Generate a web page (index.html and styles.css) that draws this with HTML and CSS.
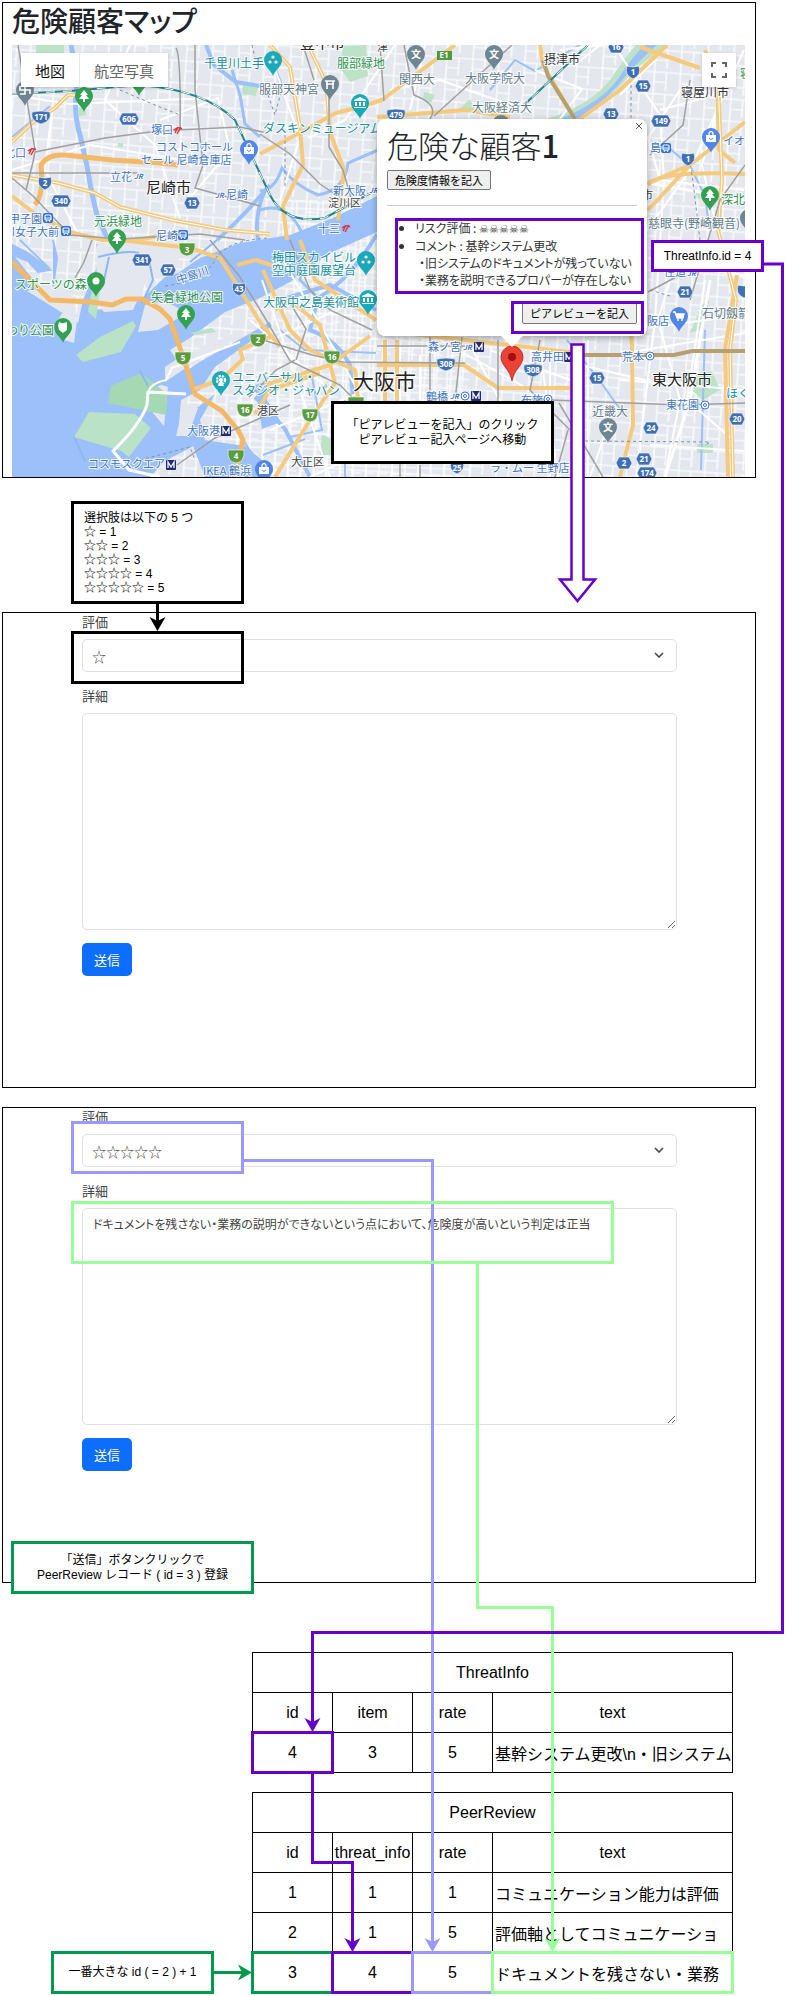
FILE: index.html
```html
<!DOCTYPE html>
<html lang="ja">
<head>
<meta charset="utf-8">
<meta name="viewport" content="width=device-width, initial-scale=1">
<title>危険顧客マップ</title>
<link rel="stylesheet" href="styles.css">
</head>
<body>
<main class="diagram">
  <section class="panel map-panel">
    <h1 class="page-title">危険顧客マップ</h1>
    <div class="map">
      <svg class="map-canvas" viewBox="12 45 733 432" role="img" aria-label="大阪周辺の地図">
        <defs>
          <pattern id="streets" width="26" height="22" patternUnits="userSpaceOnUse" patternTransform="rotate(4)">
            <path d="M0 4H26M8 0V22M20 4V22M8 14H20" fill="none" stroke="#fff" stroke-width="1.2"/>
          </pattern>
          <pattern id="blocks" width="13" height="15" patternUnits="userSpaceOnUse" patternTransform="rotate(2)">
            <path d="M0 3H13M5 0V15M5 10H13" fill="none" stroke="#fff" stroke-width="1.2"/>
          </pattern>
          <path id="pin" d="M0 16C-1 11-9 7-9 0a9 9 0 1 1 18 0C9 7 1 11 0 16Z"/>
          <path id="tree" fill="#fff" d="M0-6L4-1H2L5 3H1V6H-1V3H-5L-2-1H-4Z"/>
          <g id="bag"><path d="M-5-2H5V5H-5Z" fill="#fff"/><path d="M-2-2V-4Q0-7 2-4V-2" fill="none" stroke="#fff" stroke-width="1.3"/><path d="M-2 1Q0 4 2 1" fill="none" stroke="#4f86e8"/></g>
          <g id="dots" fill="#fff"><circle cy="-3" r="1.6"/><circle cx="-3" cy="2" r="1.6"/><circle cx="3" cy="2" r="1.6"/></g>
          <path id="museum" fill="#fff" d="M0-6L6-3V-2H-6V-3ZM-5-1H-3V3H-5ZM-1-1H1V3H-1ZM3-1H5V3H3ZM-6 4H6V5H-6Z"/>
          <path id="hex" fill="#3f70b5" stroke="#fff" stroke-width=".6" d="M-5-6H5L8 0 5 6H-5L-8 0Z"/>
          <path id="hexw" fill="#3f70b5" stroke="#fff" stroke-width=".6" d="M-7-6H7L10 0 7 6H-7L-10 0Z"/>
          <path id="nat" fill="#3f70b5" stroke="#fff" stroke-width=".6" d="M-6-6Q0-4 6-6Q9 3 0 7Q-9 3-6-6Z"/>
          <path id="natw" fill="#3f70b5" stroke="#fff" stroke-width=".6" d="M-9-5Q0-7 9-5Q11 4 0 7Q-11 4-9-5Z"/>
          <path id="exp" fill="#5b9c3f" stroke="#fff" stroke-width=".6" d="M-8-6H8Q9 6 0 7Q-9 6-8-6Z"/>
          <g id="metro"><rect x="-5" y="-5" width="10" height="10" rx="1" fill="#1d2b78"/><path d="M-3 3V-3L0 2 3-3V3" fill="none" stroke="#fff" stroke-width="1.3"/></g>
          <g id="train"><rect x="-5" y="-5" width="10" height="10" rx="2" fill="#2d6fd2"/><rect x="-3" y="-3" width="6" height="5" rx="1" fill="none" stroke="#fff" stroke-width="1.1"/><path d="M-2 4L-1 2M2 4L1 2M-3 0H3" stroke="#fff"/></g>
          <g id="ring" fill="none" stroke="#3f76c8"><circle r="4" fill="#fff"/><circle r="1.5"/></g>
          <g id="hankyu" fill="none" stroke="#dc3545" stroke-width="1.5"><path d="M-3 3L0-3M-1 4L3-3M-4 0Q0-4 4-1"/></g>
        </defs>

        <rect x="12" y="45" width="733" height="432" fill="#e4e8ee"/>
        <rect x="12" y="45" width="733" height="432" fill="url(#streets)"/>
        <path fill="url(#blocks)" d="M280 200H470V477H230V400L290 330Z"/>

        <g fill="#bce3c8">
          <path d="M36 45H64V53H36ZM343 46L366 45 368 76 350 82 340 68ZM243 84L258 86 256 96 242 94ZM680 380L712 371 720 390 703 400ZM690 333L702 305 710 300 700 330ZM697 444H713V453H697ZM322 435L337 441 335 455H320ZM78 108L85 106 86 115 79 116ZM118 143H123V147H118Z"/>
          <path d="M547 119Q590 105 610 80Q627 55 636 45H667Q650 56 630 75Q610 98 583 119Z"/>
          <path d="M424 92L435 95 431 103 423 100ZM458 110L470 99 475 110ZM694 190L702 192 699 200Z"/>
        </g>
        <path fill="#9cc0f9" d="M560 119Q604 101 620 76Q632 57 645 45H657Q645 55 628 73Q609 99 578 119Z"/>

        <g fill="#9cc0f9">
          <path d="M12 253L35 282 50 302 68 316 78 323 83 300 100 260 96 244 104 246 95 310 112 308 145 296 165 277 178 273 200 258 240 243 290 235 333 218 377 196V232L330 253 290 282 260 298 225 312 190 338 170 350 178 362 186 371 203 360 270 322 272 326 215 367 200 390 181 400 178 437 194 410 215 394 200 420 205 440 165 461 150 477H12Z"/>
          <path d="M190 438L245 446 270 467 267 477H205Z"/>
          <path d="M255 385L270 381 267 400 281 422 262 429Z"/>
        </g>
        <path d="M12 245L28 253 50 270 38 272 28 261 12 255ZM20 240L50 269M53 240L57 258 53 288" fill="#9cc0f9" stroke="#9cc0f9" stroke-width="2"/>
        <g fill="#e4e8ee">
          <path d="M27 291L55 286 70 291 78 319 61 312ZM65 308L77 320 74 343 64 340 57 322ZM97 245L136 240 182 240 178 264 145 284 133 310 104 312 96 301Z"/>
          <path d="M145 305L165 301 178 308 182 316 158 330 138 332Z"/>
          <path d="M165 367L180 357 239 331 244 334 202 357 165 382ZM150 388L162 385 168 387 164 426 153 413ZM184 403L198 408 188 436H176Z"/>
        </g>
        <g fill="#b9e2c6">
          <path d="M92 288L100 290 96 319 88 312ZM76 355L100 337 133 321 136 326 121 352 83 362ZM190 333L212 328 216 332 196 335Z"/>
          <path fill="#a5d9b4" d="M111 386L141 373 150 380 167 394 166 415 108 403Z"/>
          <path d="M89 412L135 414 151 428 129 457 121 451 74 437Z"/>
        </g>
        <path d="M74 437L85 461M140 371L148 386M217 240L190 262M149 260L153 280 142 303M98 257Q126 250 139 253M109 257L103 285" fill="none" stroke="#8db8f5" stroke-width="2"/>

        <g fill="none" stroke="#9cc0f9">
          <path stroke-width="5" d="M71 45L78 80Q72 108 80 135L87 166 92 194 97 215 108 240"/>
          <path stroke-width="4" d="M206 45L214 65 236 82 260 86M265 190Q252 220 260 250M217 240Q240 220 270 185"/>
          <path stroke-width="3" d="M232 70L240 95 245 124 260 137M260 191Q275 190 282 168Q294 185 318 195Q345 190 348 163L378 150M260 210Q290 200 305 240L300 280 320 300M283 92Q275 60 266 62"/>
          <path stroke-width="2" d="M490 90L515 60 535 71 580 45M660 140L690 166 705 196 709 225M567 340L597 377 625 416M705 330L701 470M12 137L50 106"/>
          <path stroke-width="4" d="M377 234Q350 280 318 298L310 330Q337 340 350 365L355 420M280 300L330 285 376 310M255 397L285 429 310 477"/>
          <path stroke-width="2" d="M290 377H312L322 430 290 437M345 400V477M280 330L305 350 376 353M263 455L305 439M236 430L268 477"/>
        </g>

        <g fill="none" stroke="#fff" stroke-width="2" stroke-linejoin="round">
          <path d="M12 95L70 104 210 98M12 170L90 145 220 166M130 45L105 100 155 145 180 218M52 110L45 170 80 238M160 120L218 98 230 150 185 204M148 392Q151 383 166 380L172 368 240 342M186 394L148 392"/>
          <path stroke-width="3" d="M148 391L147 405Q140 425 113 451L129 470 160 477M148 392L186 394"/>
          <path d="M270 55L300 138 280 200M308 138L345 120 395 45M425 45L410 110M390 90L440 80 530 112M560 50L602 45M535 70L582 89 560 119M615 47L660 115 664 180 655 320 636 477M655 60L620 95M575 65L600 45M680 90L648 138 660 180 744 190M660 110L722 93 702 165 715 220M744 50L690 170 640 240"/>
          <path d="M648 328L742 315M632 352L745 333M670 280L658 320 680 400 665 477M705 280L687 400 733 440M588 340V477M550 350V477M610 420L590 477M620 380L745 390M650 445L745 451M580 365L645 380M540 350L558 477M262 280L330 477M280 255L375 420M250 350L380 290M270 430L390 380M310 477L395 438M250 320L330 390M400 345V475M490 350L570 380M420 355V400M440 340L530 390M470 345L500 401"/>
        </g>
        <path fill="none" stroke="#fff" stroke-width="3" d="M648 258L745 276M632 180L744 200M710 280L690 400 665 477"/>

        <g fill="none" stroke="#f5ca7c" stroke-width="4" stroke-linejoin="round">
          <path d="M12 142L32 123 55 108 68 95H88M12 175L58 183 95 193 120 207 172 220 225 230 270 234M12 196L38 216 70 232 102 240 132 241 158 236"/>
          <path stroke="#f3b968" stroke-width="5" d="M35 205Q44 195 41 165Q47 154 65 155L112 160 160 163 178 165M12 262L33 283 50 300 92 302 112 305 126 299 142 299 160 309 170 319 185 363 195 394 222 411 238 430 243 440 235 477"/>
          <path d="M120 240L190 248 220 258 232 277 260 322 280 347M195 389L222 379 243 359 240 350 272 336M237 265L256 260 280 268"/>
          <path d="M260 154L290 138 336 113 360 107 382 100 455 45M270 45L290 67 300 128 303 165 283 206 287 240M308 45L326 83 330 132 344 170 338 220M540 45L543 65 575 119"/>
          <path d="M377 117L466 110 510 117M580 119L620 90 667 45M640 47L700 68M648 183L690 165 745 122M648 210L690 165M705 50L717 78 719 150 735 163M648 185Q660 170 745 174M718 80L722 180 718 230 736 300 730 350 733 477"/>
          <path d="M377 330L577 353M377 365H464L498 388H570M385 340V401M397 340V401M625 275L632 345 633 425 620 477M737 275L725 349 728 477M263 270L290 330 310 350 355 370 358 400M265 385L330 365 370 336M255 414L270 390 320 373M300 240L315 280 376 320M275 310L290 300 320 325 335 383 310 420 275 477"/>
        </g>
        <g fill="none" stroke="#fff" stroke-width="1">
          <path d="M12 142L32 123 55 108 68 95H88M12 175L58 183 95 193 120 207 172 220 225 230 270 234M270 45L290 67 300 128M308 45L326 83 330 132M718 80L722 180 718 230 736 300 730 350 733 477"/>
        </g>
        <path fill="none" stroke="#b69f70" stroke-width="4" d="M543 60L548 76 575 119M577 355H674L692 351H745"/>

        <g fill="none" stroke="#a0a0a0" stroke-width="1.500">
          <path d="M18 45L35 150M12 173H108L138 173M33 162L35 152 105 138 150 132 176 130 240 127 267 133M176 48Q181 55 180 130M178 165Q191 150 202 160M195 45V90L203 165 195 188 260 206M12 178L33 196 70 235 120 239 200 234 245 240M33 162L26 190"/>
          <path d="M260 134L290 154 320 184 348 203M303 45L314 80M329 95V147L343 170 351 198M380 45L384 101M404 45L414 95Q440 105 430 119M512 45L434 116M690 80L683 125 650 155M745 165L720 200 690 300M648 292L680 275"/>
          <path d="M210 240L240 277 265 318 290 361 317 374 340 385 356 401M263 340L312 355 343 362 465 363M377 346H465M430 337V401M462 337L455 401M498 340V401M540 340L530 390 570 430M559 403L603 477M568 430L555 477M524 399L682 405 745 403M177 465L215 438 290 405M290 240L310 290 330 310 372 330M290 303L306 329 296 360M249 397L276 370 295 360M400 401V477M420 465V477M92 240L84 262 75 278"/>
        </g>
        <path fill="none" stroke="#24838a" stroke-width="2" d="M12 94L70 91 140 85Q205 90 235 120L270 195Q285 225 325 218L376 190M588 45L524 105"/>
        <path fill="none" stroke="#fff" stroke-width="1" stroke-dasharray="9 8" d="M12 94L70 91 140 85Q205 90 235 120L270 195Q285 225 325 218L376 190M588 45L524 105"/>
        <path fill="none" stroke="#7f91aa" stroke-dasharray="3 3" d="M120 90L155 105 180 115M285 135V189M268 95L275 115 282 88M252 45L258 70M631 85V119M690 160L694 190 700 240M165 286Q205 280 215 260T270 238M140 460L190 447 195 460M585 441L710 442 705 445M650 290L670 296"/>

        <g class="road-numbers">
          <use href="#natw" x="41" y="117"/><text x="41" y="120">171</text>
          <use href="#hexw" x="129" y="119"/><text x="129" y="122">606</text>
          <use href="#nat" x="45" y="183"/><text x="45" y="186">2</text>
          <use href="#hexw" x="61" y="201"/><text x="61" y="204">340</text>
          <use href="#hex" x="192" y="203"/><text x="192" y="206">13</text>
          <use href="#exp" x="187" y="249"/><text x="187" y="253">3</text>
          <use href="#hexw" x="142" y="260"/><text x="142" y="263">341</text>
          <use href="#hex" x="168" y="270"/><text x="168" y="273">57</text>
          <use href="#nat" x="239" y="289"/><text x="239" y="292">43</text>
          <use href="#exp" x="183" y="358"/><text x="183" y="361">5</text>
          <use href="#exp" x="258" y="340"/><text x="258" y="343">2</text>
          <use href="#exp" x="245" y="410"/><text x="245" y="413">16</text>
          <use href="#exp" x="236" y="456"/><text x="236" y="459">4</text>
          <use href="#exp" x="332" y="357"/><text x="332" y="360">16</text>
          <use href="#exp" x="310" y="415"/><text x="310" y="418">17</text>
          <use href="#exp" x="356" y="403"/>
          <use href="#natw" x="396" y="115"/><text x="396" y="118">479</text>
          <rect x="437" y="51" width="15" height="9" fill="#4e9a3d"/><text x="444" y="58">E1</text>
          <use href="#hex" x="616" y="47"/><text x="616" y="50">16</text>
          <use href="#nat" x="633" y="72"/><text x="633" y="75">1</text>
          <use href="#hex" x="643" y="86"/><text x="643" y="89">15</text>
          <use href="#hex" x="611" y="114"/><text x="611" y="117">13</text>
          <use href="#hexw" x="661" y="121"/><text x="661" y="124">149</text>
          <use href="#nat" x="688" y="159"/><text x="688" y="162">1</text>
          <use href="#natw" x="446" y="364"/><text x="446" y="367">308</text>
          <use href="#nat" x="457" y="467"/><text x="457" y="471">25</text>
          <use href="#natw" x="533" y="370"/><text x="533" y="373">308</text>
          <use href="#hex" x="685" y="292"/><text x="685" y="295">21</text>
          <use href="#nat" x="744" y="291"/>
          <use href="#hex" x="597" y="378"/><text x="597" y="381">15</text>
          <use href="#hex" x="651" y="428"/><text x="651" y="431">24</text>
          <use href="#hex" x="737" y="419"/><text x="737" y="422">20</text>
          <use href="#hex" x="624" y="463"/><text x="624" y="466">2</text>
          <use href="#hex" x="644" y="459"/><text x="644" y="462">21</text>
          <use href="#hexw" x="647" y="473"/><text x="647" y="476">174</text>
        </g>

        <g class="pins">
          <g transform="translate(25 90)"><use href="#pin" fill="#6f8592"/><path d="M-5-4V0H5V4M-5 4H0V-4H5" fill="none" stroke="#fff" stroke-width="1.6"/></g>
          <g transform="translate(84 96)"><use href="#pin" fill="#34a152"/><use href="#tree"/></g>
          <use href="#pin" x="139" y="80" fill="#34a152"/>
          <g transform="translate(249 149)"><use href="#pin" fill="#4f86e8"/><use href="#bag"/></g>
          <g transform="translate(117 238)"><use href="#pin" fill="#34a152"/><use href="#tree"/></g>
          <g transform="translate(273 60)"><use href="#pin" fill="#1aa9b9"/><use href="#dots"/></g>
          <g transform="translate(330 84)"><use href="#pin" fill="#6f8592"/><path d="M-5-3H5M-4 0H4M-3-3V5M3-3V5" stroke="#fff" stroke-width="1.6"/></g>
          <g transform="translate(360 103)"><use href="#pin" fill="#1aa9b9"/><use href="#museum"/></g>
          <g transform="translate(416 54)"><use href="#pin" fill="#6f8592"/><text class="pin-letter" y="4">文</text></g>
          <g transform="translate(494 54)"><use href="#pin" fill="#6f8592"/><text class="pin-letter" y="4">文</text></g>
          <use href="#pin" x="501" y="124" fill="#6f8592"/>
          <g transform="translate(711 137)"><use href="#pin" fill="#4f86e8"/><use href="#bag"/></g>
          <g transform="translate(710 195)"><use href="#pin" fill="#34a152"/><use href="#tree"/></g>
          <use href="#pin" x="749" y="218" fill="#6f8592"/>
          <g transform="translate(96 281)"><use href="#pin" fill="#34a152"/><circle r="3.5" fill="#fff"/></g>
          <g transform="translate(186 314)"><use href="#pin" fill="#34a152"/><use href="#tree"/></g>
          <g transform="translate(63 327)"><use href="#pin" fill="#34a152"/><path fill="#fff" d="M-5-2L4-5V3L0 6-4 3ZM-4-5L1-3-5-1Z"/></g>
          <g transform="translate(221 380)"><use href="#pin" fill="#1aa9b9"/><circle r="4" fill="none" stroke="#fff" stroke-width="2.4" stroke-dasharray="2.2 1"/><circle r="2" fill="#fff"/><path d="M0 0L-3 6H3Z" fill="#fff"/></g>
          <g transform="translate(264 469)"><use href="#pin" fill="#4f86e8"/><use href="#bag"/></g>
          <g transform="translate(366 260)"><use href="#pin" fill="#1aa9b9"/><use href="#dots"/></g>
          <g transform="translate(368 299)"><use href="#pin" fill="#1aa9b9"/><use href="#museum"/></g>
          <g transform="translate(679 316)"><use href="#pin" fill="#4f86e8"/><path d="M-6-4H-4L-2 2H4L5-2H-3" fill="#fff" stroke="#fff" stroke-width="1.3"/><circle cx="-1" cy="4" r="1" fill="#fff"/><circle cx="3" cy="4" r="1" fill="#fff"/></g>
          <g transform="translate(608 427)"><use href="#pin" fill="#6f8592"/><text class="pin-letter" y="4">文</text></g>
        </g>

        <g class="stations">
          <use href="#hankyu" x="178" y="130"/><use href="#hankyu" x="32" y="151"/><use href="#hankyu" x="346" y="228"/>
          <use href="#train" x="48" y="218"/><use href="#train" x="66" y="231"/><use href="#train" x="183" y="235"/><use href="#train" x="666" y="148"/>
          <use href="#metro" x="226" y="431"/><use href="#metro" x="171" y="465"/><use href="#metro" x="479" y="347"/><use href="#metro" x="476" y="396"/><use href="#metro" x="569" y="357"/>
          <use href="#ring" x="650" y="356"/><use href="#ring" x="705" y="405"/><use href="#ring" x="548" y="399"/><use href="#ring" x="465" y="396"/>
          <text x="134" y="179">JR</text><text x="215" y="198">JR</text><text x="369" y="193">JR</text><text x="463" y="350">JR</text><text x="450" y="399">JR</text><text x="687" y="276">JR</text>
        </g>

        <g class="place">
          <g class="blue">
            <text x="151" y="134">塚口</text><text x="4" y="157">北口</text><text x="156" y="151">コストコホール</text><text x="141" y="164">セール 尼崎倉庫店</text>
            <text x="110" y="181">立花</text><text x="226" y="199">尼崎</text><text x="9" y="223">甲子園</text><text x="4" y="236">川女子大前</text><text x="156" y="240">尼崎</text>
            <text x="333" y="195">新大阪</text><text x="318" y="233">十三</text><text x="650" y="152">島</text><text x="723" y="145">イオン</text>
            <text x="187" y="435">大阪港</text><text x="88" y="468">コスモスクエア</text><text x="203" y="475">IKEA 鶴浜</text>
            <text x="428" y="351">森ノ宮</text><text x="426" y="401">鶴橋</text><text x="490" y="472">ラ・ムー 生野店</text><text x="531" y="361">高井田</text>
            <text x="622" y="361">荒本</text><text x="521" y="404">布施</text><text x="666" y="409">東花園</text><text x="647" y="325">阪店</text><text x="664" y="276">住道</text>
            <text x="178" y="284" transform="rotate(-18 178 284)">中島川</text>
          </g>
          <g class="green">
            <text x="94" y="226">元浜緑地</text><text x="337" y="68">服部緑地</text><text x="740" y="78">寝</text><text x="721" y="204">深北</text>
            <text x="15" y="289">スポーツの森</text><text x="151" y="302">矢倉緑地公園</text><text x="6" y="335">わり公園</text>
          </g>
          <g class="teal">
            <text x="204" y="68">千里川土手</text><text x="263" y="133">ダスキンミュージアム</text><text x="272" y="262">梅田スカイビル</text><text x="272" y="275">空中庭園展望台</text>
            <text x="263" y="307">大阪中之島美術館</text><text x="232" y="382">ユニバーサル・</text><text x="232" y="395">スタジオ・ジャパン</text><text x="726" y="398">ほく</text>
          </g>
          <g class="gray">
            <text x="259" y="94">服部天神宮</text><text x="399" y="84">関西大</text><text x="465" y="83">大阪学院大</text><text x="472" y="112">大阪経済大</text>
            <text x="648" y="228">慈眼寺(野崎観音)</text><text x="702" y="318">石切劔箭</text><text x="592" y="416">近畿大</text>
          </g>
          <g class="ward"><text x="328" y="207">淀川区</text><text x="257" y="415">港区</text><text x="291" y="466">大正区</text><text x="377" y="51">津</text><text x="642" y="199">市</text></g>
          <g class="city"><text x="146" y="193">尼崎市</text><text x="300" y="48">豊中市</text><text x="652" y="385">東大阪市</text></g>
          <g class="town"><text x="544" y="64">摂津市</text><text x="681" y="97">寝屋川市</text></g>
          <text class="metropolis" x="353" y="389">大阪市</text>
        </g>
        <path d="M512 378C510 366 501 363 501 354a11 11 0 0 1 22 0C523 363 514 366 512 378Z" transform="translate(0 3)" fill="#ea4335" stroke="#b31412" stroke-width=".7"/><circle cx="512" cy="357" r="4" fill="#a50e0e"/>
      </svg>

      <div class="map-types">
        <button type="button" class="map-type map-type-on">地図</button>
        <button type="button" class="map-type">航空写真</button>
      </div>
      <button type="button" class="fullscreen" aria-label="全画面表示">
        <svg width="16" height="16" viewBox="0 0 16 16"><path d="M1 5V1H5M11 1H15V5M15 11V15H11M5 15H1V11" fill="none" stroke="#666" stroke-width="2"/></svg>
      </button>

      <article class="info">
        <button type="button" class="info-close" aria-label="閉じる"><svg width="8" height="8" viewBox="0 0 8 8"><path d="M1 1L7 7M7 1L1 7" stroke="#555" stroke-width="1"/></svg></button>
        <h2 class="info-title">危険な顧客<b>1</b></h2>
        <button type="button" class="info-button">危険度情報を記入</button>
        <hr class="info-rule">
        <ul class="info-list">
          <li>リスク評価 : <span class="skulls">☠☠☠☠☠</span></li>
          <li>コメント : 基幹システム更改<br><span class="sub">・旧システムのドキュメントが残っていない</span><br><span class="sub">・業務を説明できるプロパーが存在しない</span></li>
        </ul>
        <button type="button" class="info-button info-review">ピアレビューを記入</button>
      </article>
    </div>
  </section>

  <form class="panel review-form">
    <label for="rate1">評価</label>
    <div class="select-wrap">
      <select id="rate1"><option>☆</option><option>☆☆</option><option>☆☆☆</option><option>☆☆☆☆</option><option>☆☆☆☆☆</option></select>
      <svg class="chevron" width="10" height="6" viewBox="0 0 10 6"><path d="M1 1L5 5 9 1" fill="none" stroke="#444" stroke-width="1.6"/></svg>
    </div>
    <label for="detail1">詳細</label>
    <textarea id="detail1"></textarea>
    <button type="button" class="send">送信</button>
  </form>

  <form class="panel review-form review-form-filled">
    <label for="rate2">評価</label>
    <div class="select-wrap">
      <select id="rate2"><option>☆☆☆☆☆</option><option>☆☆☆☆</option><option>☆☆☆</option><option>☆☆</option><option>☆</option></select>
      <svg class="chevron" width="10" height="6" viewBox="0 0 10 6"><path d="M1 1L5 5 9 1" fill="none" stroke="#444" stroke-width="1.6"/></svg>
    </div>
    <label for="detail2">詳細</label>
    <textarea id="detail2">ドキュメントを残さない・業務の説明ができないという点において、危険度が高いという判定は正当</textarea>
    <button type="button" class="send">送信</button>
  </form>

  <section class="records">
    <table>
      <colgroup><col class="narrow"><col class="narrow"><col class="narrow"><col></colgroup>
      <thead>
        <tr><th colspan="4">ThreatInfo</th></tr>
        <tr><th>id</th><th>item</th><th>rate</th><th>text</th></tr>
      </thead>
      <tbody><tr><td class="mark purple">4</td><td>3</td><td>5</td><td class="body-text">基幹システム更改\n・旧システム</td></tr></tbody>
    </table>
    <table>
      <colgroup><col class="narrow"><col class="narrow"><col class="narrow"><col></colgroup>
      <thead>
        <tr><th colspan="4">PeerReview</th></tr>
        <tr><th>id</th><th>threat_info</th><th>rate</th><th>text</th></tr>
      </thead>
      <tbody>
        <tr><td>1</td><td>1</td><td>1</td><td class="body-text">コミュニケーション能力は評価</td></tr>
        <tr><td>2</td><td>1</td><td>5</td><td class="body-text">評価軸としてコミュニケーショ</td></tr>
        <tr><td class="mark forest">3</td><td class="mark purple">4</td><td class="mark lavender">5</td><td class="body-text mark mint">ドキュメントを残さない・業務</td></tr>
      </tbody>
    </table>
  </section>

  <svg class="links" width="794" height="1996" viewBox="0 0 794 1996" aria-hidden="true">
    <defs><path id="head" d="M0 0L-8-14 0-10 8-14Z"/></defs>
    <g fill="none" stroke-width="3">
      <path stroke="#99f" d="M244 1160.500H432.500V1942"/>
      <rect stroke="#99f" x="72.500" y="1122.500" width="170" height="50"/>
      <path stroke="#9f9" d="M477.500 1264V1607.500H552.500V1942"/>
      <rect stroke="#9f9" x="72.500" y="1202.500" width="540" height="60"/>
      <path stroke="#60c" d="M764 264H782.500V1632.500H312.500V1722M312.500 1774V1862.500H352.500V1942"/>
      <rect stroke="#60c" x="396.500" y="219.500" width="246" height="73"/>
      <rect stroke="#60c" x="512.500" y="302.500" width="130" height="30"/>
      <path stroke="#60c" stroke-width="2.500" fill="#fff" d="M571.500 344.500H583.500V579.500H595L577.500 601 560 579.500H571.500Z"/>
      <path stroke="#000" d="M157.500 603V622"/>
      <rect stroke="#000" x="72.500" y="632.500" width="170" height="50"/>
      <path stroke="#00994d" d="M214 1972.500H242"/>
    </g>
    <use href="#head" x="432.500" y="1952" fill="#99f"/>
    <use href="#head" x="552.500" y="1952" fill="#9f9"/>
    <use href="#head" x="312.500" y="1732" fill="#60c"/>
    <use href="#head" x="352.500" y="1952" fill="#60c"/>
    <use href="#head" x="157.500" y="631" fill="#000"/>
    <use href="#head" transform="translate(252 1972.500) rotate(-90)" fill="#00994d"/>
  </svg>
  <p class="note note-click">「ピアレビューを記入」のクリック<br>ピアレビュー記入ページへ移動</p>
  <p class="note note-threat">ThreatInfo.id = 4</p>
  <p class="note note-options">選択肢は以下の 5 つ<br>☆ = 1<br>☆☆ = 2<br>☆☆☆ = 3<br>☆☆☆☆ = 4<br>☆☆☆☆☆ = 5</p>
  <p class="note note-send">「送信」ボタンクリックで<br>PeerReview レコード ( id = 3 ) 登録</p>
  <p class="note note-next">一番大きな id ( = 2 ) + 1</p>
</main>
</body>
</html>
```
FILE: styles.css
```css
* { box-sizing: border-box; }
body { margin: 0; background: #fff; color: #000; font-family: "Liberation Sans", "Noto Sans CJK JP", sans-serif; }
button, select, textarea { font-family: inherit; }
.diagram { position: relative; padding: 2px 38px 1px 2px; }

.panel { margin: 0; border: 1px solid #000; }
.map-panel { padding: 0 10px 0 9px; }
.page-title { margin: 0; height: 42px; line-height: 34px; font-size: 28px; font-weight: 500; color: #212529; font-family: "Noto Sans CJK JP", sans-serif; font-feature-settings: "palt"; }
.map { position: relative; }
.map-canvas { display: block; width: 100%; height: auto; font-family: "Noto Sans CJK JP", sans-serif; }
.road-numbers text { fill: #fff; font-size: 8px; font-weight: 700; text-anchor: middle; font-family: "Open Sans", sans-serif; }
.pin-letter { fill: #fff; font-size: 10px; font-weight: 700; text-anchor: middle; }
.stations text { fill: #3f76c8; font-size: 7px; font-weight: 700; font-style: italic; stroke: #fff; stroke-width: 2px; paint-order: stroke; }
.place text { font-size: 12px; stroke: #fff; stroke-width: 2px; stroke-opacity: .85; paint-order: stroke; }
.place .blue text { fill: #3f76c0; font-size: 11px; }
.place .green text { fill: #2f9250; }
.place .teal text { fill: #16929f; }
.place .gray text { fill: #607c8b; }
.place .ward text { fill: #444; font-size: 11px; }
.place .town text { fill: #333; }
.place .city text { fill: #222; font-size: 15px; }
.place .metropolis { fill: #222; font-size: 21px; }

.map-types { position: absolute; top: 8px; left: 9px; display: flex; background: #fff; box-shadow: 0 1px 3px #0003; }
.map-type { height: 34px; padding: 0 14px; border: 0; background: none; color: #666; font-size: 15px; }
.map-type-on { color: #111; border-right: 1px solid #e8e8e8; }
.fullscreen { position: absolute; top: 8px; right: 9px; display: grid; place-items: center; width: 34px; height: 34px; padding: 0; border: 0; background: #fff; box-shadow: 0 1px 3px #0003; }

.info { position: absolute; top: 74px; left: 365px; width: 270px; height: 217px; padding: 10px 10px 12px; display: flex; flex-direction: column; align-items: flex-start; border-radius: 8px; background: #fff; box-shadow: 0 2px 7px #0005; color: #333; }
.info::after { content: ""; position: absolute; top: 216px; left: 123px; border: 12px solid transparent; border-top-color: #fff; border-bottom: 0; }
.info-close { position: absolute; top: 3px; right: 4px; width: 8px; height: 8px; padding: 0; border: 0; background: none; line-height: 0; }
.info-title { margin: 0 0 9px; font-size: 31px; line-height: 32px; font-weight: 300; color: #212529; font-family: "Noto Sans CJK JP", sans-serif; font-feature-settings: "palt"; }
.info-title b { font-weight: 500; }
.info-button { height: 22px; padding: 0 7px; border: 1px solid #767676; border-radius: 2px; background: #efefef; color: #000; font-size: 11px; white-space: nowrap; }
.info-rule { width: 100%; margin: 15px 0 13px; border: 0; border-top: 1px solid #ccc; }
.info-list { margin: 0 0 14px; padding-left: 28px; font-size: 12px; line-height: 17px; white-space: nowrap; font-family: "Noto Sans CJK JP", sans-serif; font-feature-settings: "palt"; }
.info-list .sub { padding-left: 4px; }
.skulls { font-size: 11px; }
.info-review { align-self: flex-end; flex-shrink: 0; }

.review-form { display: flex; flex-direction: column; align-items: flex-start; min-height: 476px; margin-top: 134px; padding: 0 78px 0 79px; font-size: 13px; color: #444; font-family: "Noto Sans CJK JP", sans-serif; }
.review-form-filled { margin-top: 19px; }
.review-form label { margin-bottom: 8px; line-height: 18px; }
.select-wrap { position: relative; width: 100%; margin-bottom: 15px; }
.select-wrap select { display: block; width: 100%; height: 33px; padding: 0 9px; appearance: none; border: 1px solid #dee2e6; border-radius: 5px; background: #fff; color: #555; font-size: 14px; }
.chevron { position: absolute; top: 13px; right: 13px; }
.review-form textarea { width: 100%; height: 217px; margin-bottom: 13px; padding: 5px 10px; border: 1px solid #dee2e6; border-radius: 5px; color: #444; font-size: 12px; line-height: 20px; font-feature-settings: "palt"; resize: vertical; }
.send { width: 50px; height: 33px; padding: 0; border: 0; border-radius: 5px; background: #0d6efd; color: #fff; font-size: 13px; }

.records { display: grid; gap: 19px; width: 481px; margin: 69px 0 0 250px; }
table { width: 100%; table-layout: fixed; border-collapse: collapse; font-size: 16px; }
.narrow { width: 80px; }
th, td { position: relative; height: 40px; padding: 0; border: 1px solid #000; font-weight: 400; text-align: center; white-space: nowrap; }
.body-text { padding-left: 2px; text-align: left; }
.mark::after { content: ""; position: absolute; inset: -2px; border: 3px solid; }
.purple::after { border-color: #60c; }
.forest::after { border-color: #00994d; }
.lavender::after { border-color: #99f; }
.mint::after { border-color: #9f9; }

.links { position: absolute; top: 0; left: 0; pointer-events: none; }
.note { position: absolute; display: grid; place-content: center; margin: 0; border: 3px solid #000; background: #fff; font-size: 12px; line-height: 15px; text-align: center; white-space: nowrap; }
.note-click { top: 401px; left: 331px; width: 223px; height: 63px; }
.note-threat { top: 240px; left: 651px; width: 113px; height: 32px; border-color: #60c; }
.note-options { top: 501px; left: 71px; width: 173px; height: 103px; padding-left: 10px; line-height: 14px; justify-content: start; text-align: left; }
.note-send { top: 1541px; left: 11px; width: 243px; height: 53px; border-color: #00994d; }
.note-next { top: 1951px; left: 51px; width: 163px; height: 43px; border-color: #00994d; }
```
